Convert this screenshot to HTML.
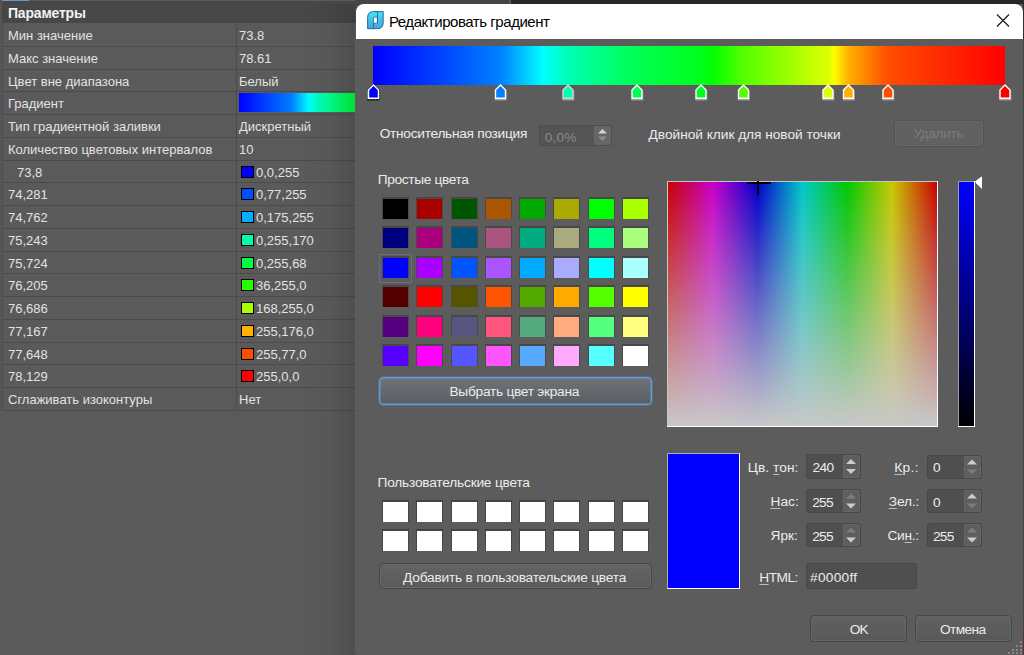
<!DOCTYPE html><html><head><meta charset="utf-8"><style>
html,body{margin:0;padding:0;width:1024px;height:655px;overflow:hidden;background:#585858;position:relative;font-family:"Liberation Sans", sans-serif;}
.t{position:absolute;line-height:20px;white-space:nowrap;}
div{box-sizing:border-box;}
u{text-decoration:underline;text-decoration-color:#bdbdbd;text-underline-offset:2px;text-decoration-thickness:1px;}
</style></head><body>
<div style="position:absolute;left:0px;top:0px;width:355px;height:655px;background:#5a5a5a"></div>
<div style="position:absolute;left:2px;top:1px;width:353px;height:22px;background:#474747"></div>
<div style="position:absolute;left:2px;top:0px;width:27px;height:1px;background:#6b97c9"></div>
<div style="position:absolute;left:0px;top:0px;width:2px;height:411px;background:#555555"></div>
<div class="t" style="left:8px;top:3px;font-size:14px;color:#f2f2f2;font-weight:bold;letter-spacing:-0.2px">Параметры</div>
<div style="position:absolute;left:2px;top:46px;width:353px;height:1px;background:#4b4b4b"></div>
<div class="t" style="left:8px;top:26px;font-size:13px;color:#e2e2e2;font-weight:normal;">Мин значение</div>
<div class="t" style="left:239px;top:26px;font-size:13px;color:#e2e2e2;font-weight:normal;">73.8</div>
<div style="position:absolute;left:2px;top:69px;width:353px;height:1px;background:#4b4b4b"></div>
<div class="t" style="left:8px;top:49px;font-size:13px;color:#e2e2e2;font-weight:normal;">Макс значение</div>
<div class="t" style="left:239px;top:49px;font-size:13px;color:#e2e2e2;font-weight:normal;">78.61</div>
<div style="position:absolute;left:2px;top:91px;width:353px;height:1px;background:#4b4b4b"></div>
<div class="t" style="left:8px;top:72px;font-size:13px;color:#e2e2e2;font-weight:normal;">Цвет вне диапазона</div>
<div class="t" style="left:239px;top:72px;font-size:13px;color:#e2e2e2;font-weight:normal;">Белый</div>
<div style="position:absolute;left:2px;top:114px;width:353px;height:1px;background:#4b4b4b"></div>
<div class="t" style="left:8px;top:94px;font-size:13px;color:#e2e2e2;font-weight:normal;">Градиент</div>
<div style="position:absolute;left:239px;top:93px;width:116px;height:19px;overflow:hidden"><div style="width:261px;height:19px;background:linear-gradient(90deg,rgb(0,0,255) 0.08%,rgb(0,3,255) 0.56%,rgb(0,6,255) 1.04%,rgb(0,9,255) 1.51%,rgb(0,12,255) 1.99%,rgb(0,15,255) 2.47%,rgb(0,18,255) 2.95%,rgb(0,21,255) 3.43%,rgb(0,24,255) 3.91%,rgb(0,27,255) 4.39%,rgb(0,30,255) 4.86%,rgb(0,34,255) 5.34%,rgb(0,37,255) 5.82%,rgb(0,40,255) 6.30%,rgb(0,43,255) 6.78%,rgb(0,46,255) 7.26%,rgb(0,49,255) 7.73%,rgb(0,52,255) 8.21%,rgb(0,55,255) 8.69%,rgb(0,58,255) 9.17%,rgb(0,61,255) 9.65%,rgb(0,64,255) 10.13%,rgb(0,67,255) 10.61%,rgb(0,70,255) 11.08%,rgb(0,73,255) 11.56%,rgb(0,76,255) 12.04%,rgb(0,79,255) 12.52%,rgb(0,82,255) 13.00%,rgb(0,85,255) 13.48%,rgb(0,88,255) 13.95%,rgb(0,91,255) 14.43%,rgb(0,94,255) 14.91%,rgb(0,98,255) 15.39%,rgb(0,101,255) 15.87%,rgb(0,104,255) 16.35%,rgb(0,107,255) 16.82%,rgb(0,110,255) 17.30%,rgb(0,113,255) 17.78%,rgb(0,116,255) 18.26%,rgb(0,119,255) 18.74%,rgb(0,122,255) 19.22%,rgb(0,125,255) 19.70%,rgb(0,128,255) 20.17%,rgb(0,137,255) 20.66%,rgb(0,146,255) 21.14%,rgb(0,156,255) 21.63%,rgb(0,165,255) 22.12%,rgb(0,174,255) 22.60%,rgb(0,183,255) 23.09%,rgb(0,192,255) 23.57%,rgb(0,201,255) 24.06%,rgb(0,211,255) 24.54%,rgb(0,220,255) 25.03%,rgb(0,229,255) 25.51%,rgb(0,238,255) 26.00%,rgb(0,247,255) 26.49%,rgb(0,255,253) 26.97%,rgb(0,255,244) 27.46%,rgb(0,255,235) 27.94%,rgb(0,255,226) 28.43%,rgb(0,255,217) 28.91%,rgb(0,255,208) 29.40%,rgb(0,255,198) 29.88%,rgb(0,255,189) 30.37%,rgb(0,255,180) 30.85%,rgb(0,255,176) 31.33%,rgb(0,255,171) 31.80%,rgb(0,255,167) 32.28%,rgb(0,255,163) 32.75%,rgb(0,255,158) 33.23%,rgb(0,255,154) 33.70%,rgb(0,255,150) 34.18%,rgb(0,255,145) 34.65%,rgb(0,255,141) 35.13%,rgb(0,255,137) 35.60%,rgb(0,255,132) 36.08%,rgb(0,255,128) 36.55%,rgb(0,255,123) 37.03%,rgb(0,255,119) 37.50%,rgb(0,255,115) 37.97%,rgb(0,255,110) 38.45%,rgb(0,255,106) 38.92%,rgb(0,255,102) 39.40%,rgb(0,255,97) 39.87%,rgb(0,255,93) 40.35%,rgb(0,255,89) 40.82%,rgb(0,255,84) 41.30%,rgb(0,255,80) 41.77%,rgb(0,255,78) 42.25%,rgb(0,255,75) 42.74%,rgb(0,255,73) 43.22%,rgb(0,255,70) 43.70%,rgb(0,255,68) 44.18%,rgb(0,255,66) 44.67%,rgb(0,255,63) 45.15%,rgb(0,255,61) 45.63%,rgb(0,255,59) 46.11%,rgb(0,255,56) 46.59%,rgb(0,255,54) 47.08%,rgb(0,255,51) 47.56%,rgb(0,255,49) 48.04%,rgb(0,255,47) 48.52%,rgb(0,255,44) 49.01%,rgb(0,255,42) 49.49%,rgb(0,255,40) 49.97%,rgb(0,255,37) 50.45%,rgb(0,255,35) 50.93%,rgb(0,255,32) 51.42%,rgb(0,255,30) 51.90%,rgb(0,255,22) 52.38%,rgb(0,255,14) 52.86%,rgb(0,255,5) 53.34%,rgb(3,255,0) 53.82%,rgb(11,255,0) 54.30%,rgb(19,255,0) 54.78%,rgb(27,255,0) 55.26%,rgb(36,255,0) 55.74%,rgb(44,255,0) 56.22%,rgb(52,255,0) 56.70%,rgb(60,255,0) 57.18%,rgb(69,255,0) 57.66%,rgb(77,255,0) 58.14%,rgb(85,255,0) 58.62%,rgb(90,255,0) 59.10%,rgb(95,255,0) 59.58%,rgb(99,255,0) 60.06%,rgb(104,255,0) 60.53%,rgb(109,255,0) 61.01%,rgb(114,255,0) 61.49%,rgb(119,255,0) 61.97%,rgb(124,255,0) 62.44%,rgb(128,255,0) 62.92%,rgb(133,255,0) 63.40%,rgb(138,255,0) 63.88%,rgb(143,255,0) 64.35%,rgb(148,255,0) 64.83%,rgb(152,255,0) 65.31%,rgb(157,255,0) 65.79%,rgb(162,255,0) 66.26%,rgb(167,255,0) 66.74%,rgb(172,255,0) 67.22%,rgb(177,255,0) 67.70%,rgb(181,255,0) 68.17%,rgb(186,255,0) 68.65%,rgb(191,255,0) 69.13%,rgb(196,255,0) 69.61%,rgb(201,255,0) 70.08%,rgb(206,255,0) 70.56%,rgb(210,255,0) 71.04%,rgb(215,255,0) 71.52%,rgb(220,255,0) 71.99%,rgb(239,255,0) 72.53%,rgb(255,252,0) 73.07%,rgb(255,233,0) 73.62%,rgb(255,214,0) 74.16%,rgb(255,195,0) 74.70%,rgb(255,176,0) 75.24%,rgb(255,168,0) 75.72%,rgb(255,161,0) 76.20%,rgb(255,153,0) 76.68%,rgb(255,146,0) 77.16%,rgb(255,138,0) 77.64%,rgb(255,130,0) 78.12%,rgb(255,123,0) 78.60%,rgb(255,115,0) 79.08%,rgb(255,107,0) 79.56%,rgb(255,100,0) 80.05%,rgb(255,92,0) 80.53%,rgb(255,85,0) 81.01%,rgb(255,77,0) 81.49%,rgb(255,75,0) 81.96%,rgb(255,73,0) 82.44%,rgb(255,71,0) 82.91%,rgb(255,69,0) 83.39%,rgb(255,67,0) 83.86%,rgb(255,65,0) 84.34%,rgb(255,63,0) 84.81%,rgb(255,61,0) 85.28%,rgb(255,59,0) 85.76%,rgb(255,57,0) 86.23%,rgb(255,55,0) 86.71%,rgb(255,53,0) 87.18%,rgb(255,51,0) 87.66%,rgb(255,49,0) 88.13%,rgb(255,47,0) 88.61%,rgb(255,45,0) 89.08%,rgb(255,43,0) 89.56%,rgb(255,41,0) 90.03%,rgb(255,39,0) 90.51%,rgb(255,38,0) 90.98%,rgb(255,36,0) 91.46%,rgb(255,34,0) 91.93%,rgb(255,32,0) 92.41%,rgb(255,30,0) 92.88%,rgb(255,28,0) 93.35%,rgb(255,26,0) 93.83%,rgb(255,24,0) 94.30%,rgb(255,22,0) 94.78%,rgb(255,20,0) 95.25%,rgb(255,18,0) 95.73%,rgb(255,16,0) 96.20%,rgb(255,14,0) 96.68%,rgb(255,12,0) 97.15%,rgb(255,10,0) 97.63%,rgb(255,8,0) 98.10%,rgb(255,6,0) 98.58%,rgb(255,4,0) 99.05%,rgb(255,2,0) 99.53%,rgb(255,0,0) 100%)"></div></div>
<div style="position:absolute;left:2px;top:137px;width:353px;height:1px;background:#4b4b4b"></div>
<div class="t" style="left:8px;top:117px;font-size:13px;color:#e2e2e2;font-weight:normal;">Тип градиентной заливки</div>
<div class="t" style="left:239px;top:117px;font-size:13px;color:#e2e2e2;font-weight:normal;">Дискретный</div>
<div style="position:absolute;left:2px;top:160px;width:353px;height:1px;background:#4b4b4b"></div>
<div class="t" style="left:8px;top:140px;font-size:13px;color:#e2e2e2;font-weight:normal;">Количество цветовых интервалов</div>
<div class="t" style="left:239px;top:140px;font-size:13px;color:#e2e2e2;font-weight:normal;">10</div>
<div style="position:absolute;left:2px;top:182px;width:353px;height:1px;background:#4b4b4b"></div>
<div class="t" style="left:17px;top:163px;font-size:13px;color:#e2e2e2;font-weight:normal;">73,8</div>
<div style="position:absolute;left:241px;top:166px;width:13px;height:12px;background:#0000ff;border:1px solid #000"></div>
<div class="t" style="left:256px;top:163px;font-size:13px;color:#e2e2e2;font-weight:normal;">0,0,255</div>
<div style="position:absolute;left:2px;top:205px;width:353px;height:1px;background:#4b4b4b"></div>
<div class="t" style="left:8px;top:185px;font-size:13px;color:#e2e2e2;font-weight:normal;">74,281</div>
<div style="position:absolute;left:241px;top:188px;width:13px;height:12px;background:#004dff;border:1px solid #000"></div>
<div class="t" style="left:256px;top:185px;font-size:13px;color:#e2e2e2;font-weight:normal;">0,77,255</div>
<div style="position:absolute;left:2px;top:228px;width:353px;height:1px;background:#4b4b4b"></div>
<div class="t" style="left:8px;top:208px;font-size:13px;color:#e2e2e2;font-weight:normal;">74,762</div>
<div style="position:absolute;left:241px;top:211px;width:13px;height:12px;background:#00afff;border:1px solid #000"></div>
<div class="t" style="left:256px;top:208px;font-size:13px;color:#e2e2e2;font-weight:normal;">0,175,255</div>
<div style="position:absolute;left:2px;top:251px;width:353px;height:1px;background:#4b4b4b"></div>
<div class="t" style="left:8px;top:231px;font-size:13px;color:#e2e2e2;font-weight:normal;">75,243</div>
<div style="position:absolute;left:241px;top:234px;width:13px;height:12px;background:#00ffaa;border:1px solid #000"></div>
<div class="t" style="left:256px;top:231px;font-size:13px;color:#e2e2e2;font-weight:normal;">0,255,170</div>
<div style="position:absolute;left:2px;top:273px;width:353px;height:1px;background:#4b4b4b"></div>
<div class="t" style="left:8px;top:254px;font-size:13px;color:#e2e2e2;font-weight:normal;">75,724</div>
<div style="position:absolute;left:241px;top:257px;width:13px;height:12px;background:#00ff44;border:1px solid #000"></div>
<div class="t" style="left:256px;top:254px;font-size:13px;color:#e2e2e2;font-weight:normal;">0,255,68</div>
<div style="position:absolute;left:2px;top:296px;width:353px;height:1px;background:#4b4b4b"></div>
<div class="t" style="left:8px;top:276px;font-size:13px;color:#e2e2e2;font-weight:normal;">76,205</div>
<div style="position:absolute;left:241px;top:279px;width:13px;height:12px;background:#24ff00;border:1px solid #000"></div>
<div class="t" style="left:256px;top:276px;font-size:13px;color:#e2e2e2;font-weight:normal;">36,255,0</div>
<div style="position:absolute;left:2px;top:319px;width:353px;height:1px;background:#4b4b4b"></div>
<div class="t" style="left:8px;top:299px;font-size:13px;color:#e2e2e2;font-weight:normal;">76,686</div>
<div style="position:absolute;left:241px;top:302px;width:13px;height:12px;background:#a8ff00;border:1px solid #000"></div>
<div class="t" style="left:256px;top:299px;font-size:13px;color:#e2e2e2;font-weight:normal;">168,255,0</div>
<div style="position:absolute;left:2px;top:342px;width:353px;height:1px;background:#4b4b4b"></div>
<div class="t" style="left:8px;top:322px;font-size:13px;color:#e2e2e2;font-weight:normal;">77,167</div>
<div style="position:absolute;left:241px;top:325px;width:13px;height:12px;background:#ffb000;border:1px solid #000"></div>
<div class="t" style="left:256px;top:322px;font-size:13px;color:#e2e2e2;font-weight:normal;">255,176,0</div>
<div style="position:absolute;left:2px;top:364px;width:353px;height:1px;background:#4b4b4b"></div>
<div class="t" style="left:8px;top:345px;font-size:13px;color:#e2e2e2;font-weight:normal;">77,648</div>
<div style="position:absolute;left:241px;top:348px;width:13px;height:12px;background:#ff4d00;border:1px solid #000"></div>
<div class="t" style="left:256px;top:345px;font-size:13px;color:#e2e2e2;font-weight:normal;">255,77,0</div>
<div style="position:absolute;left:2px;top:387px;width:353px;height:1px;background:#4b4b4b"></div>
<div class="t" style="left:8px;top:367px;font-size:13px;color:#e2e2e2;font-weight:normal;">78,129</div>
<div style="position:absolute;left:241px;top:370px;width:13px;height:12px;background:#ff0000;border:1px solid #000"></div>
<div class="t" style="left:256px;top:367px;font-size:13px;color:#e2e2e2;font-weight:normal;">255,0,0</div>
<div style="position:absolute;left:2px;top:410px;width:353px;height:1px;background:#4b4b4b"></div>
<div class="t" style="left:8px;top:390px;font-size:13px;color:#e2e2e2;font-weight:normal;">Сглаживать изоконтуры</div>
<div class="t" style="left:239px;top:390px;font-size:13px;color:#e2e2e2;font-weight:normal;">Нет</div>
<div style="position:absolute;left:2px;top:23px;width:1px;height:387px;background:#505050"></div>
<div style="position:absolute;left:236px;top:23px;width:1px;height:387px;background:#4b4b4b"></div>
<div style="position:absolute;left:300px;top:4px;width:55px;height:651px;background:linear-gradient(90deg,rgba(0,0,0,0),rgba(0,0,0,0.03) 50%,rgba(0,0,0,0.13))"></div>
<div style="position:absolute;left:355px;top:0px;width:155px;height:4px;background:#454545"></div>
<div style="position:absolute;left:510px;top:0px;width:514px;height:4px;background:#282828"></div>
<div style="position:absolute;left:509px;top:0px;width:2px;height:4px;background:#555555"></div>
<div style="position:absolute;left:355px;top:4px;width:12px;height:19px;background:#474747"></div>
<div style="position:absolute;left:356px;top:4px;width:667px;height:35px;background:#ffffff;border-radius:8px 8px 0 0"></div>
<div style="position:absolute;left:355px;top:39px;width:668px;height:617px;background:#5c5c5c;border-radius:0 0 9px 9px;box-shadow:inset 1px 0 0 #606060"></div>
<div style="position:absolute;left:1023px;top:0px;width:1px;height:655px;background:#474747"></div>
<div style="position:absolute;left:1023px;top:0px;width:1px;height:39px;background:#2e2e2e"></div>
<div style="position:absolute;left:1023px;top:600px;width:1px;height:55px;background:linear-gradient(#474747,#5a3030)"></div>
<svg style="position:absolute;left:364px;top:8px" width="24" height="24" viewBox="0 0 24 24">
<defs><linearGradient id="ig" x1="0" y1="0" x2="0" y2="1"><stop offset="0" stop-color="#46e4f8"/><stop offset="1" stop-color="#47a0de"/></linearGradient></defs>
<path d="M3.6,20.7 V9.6 Q3.6,3.6 9.6,3.6 H19.2 V14.7 Q19.2,20.7 13.2,20.7 Z" fill="url(#ig)" stroke="#1d5f86" stroke-width="0.9"/>
<path d="M9.4,15.2 V9.9 Q9.4,9.3 10.2,9.3 H13.4 V15.2 Z" fill="#ffffff" stroke="#1d5f86" stroke-width="0.7"/>
<path d="M13.5,3.8 V15.2 M9.4,15.2 V20.5" stroke="#1d5f86" stroke-width="0.8"/>
</svg>
<div class="t" style="left:388.9px;top:12.0px;font-size:15px;color:#000000;letter-spacing:-0.452px">Редактировать градиент</div>
<svg style="position:absolute;left:994px;top:11px" width="18" height="18" viewBox="0 0 18 18"><path d="M3,3.5 L15,15.5 M15,3.5 L3,15.5" stroke="#222" stroke-width="1.3"/></svg>
<div style="position:absolute;left:373px;top:46px;width:632px;height:39px;background:linear-gradient(90deg,rgb(0,0,255) 0.08%,rgb(0,3,255) 0.56%,rgb(0,6,255) 1.04%,rgb(0,9,255) 1.51%,rgb(0,12,255) 1.99%,rgb(0,15,255) 2.47%,rgb(0,18,255) 2.95%,rgb(0,21,255) 3.43%,rgb(0,24,255) 3.91%,rgb(0,27,255) 4.39%,rgb(0,30,255) 4.86%,rgb(0,34,255) 5.34%,rgb(0,37,255) 5.82%,rgb(0,40,255) 6.30%,rgb(0,43,255) 6.78%,rgb(0,46,255) 7.26%,rgb(0,49,255) 7.73%,rgb(0,52,255) 8.21%,rgb(0,55,255) 8.69%,rgb(0,58,255) 9.17%,rgb(0,61,255) 9.65%,rgb(0,64,255) 10.13%,rgb(0,67,255) 10.61%,rgb(0,70,255) 11.08%,rgb(0,73,255) 11.56%,rgb(0,76,255) 12.04%,rgb(0,79,255) 12.52%,rgb(0,82,255) 13.00%,rgb(0,85,255) 13.48%,rgb(0,88,255) 13.95%,rgb(0,91,255) 14.43%,rgb(0,94,255) 14.91%,rgb(0,98,255) 15.39%,rgb(0,101,255) 15.87%,rgb(0,104,255) 16.35%,rgb(0,107,255) 16.82%,rgb(0,110,255) 17.30%,rgb(0,113,255) 17.78%,rgb(0,116,255) 18.26%,rgb(0,119,255) 18.74%,rgb(0,122,255) 19.22%,rgb(0,125,255) 19.70%,rgb(0,128,255) 20.17%,rgb(0,137,255) 20.66%,rgb(0,146,255) 21.14%,rgb(0,156,255) 21.63%,rgb(0,165,255) 22.12%,rgb(0,174,255) 22.60%,rgb(0,183,255) 23.09%,rgb(0,192,255) 23.57%,rgb(0,201,255) 24.06%,rgb(0,211,255) 24.54%,rgb(0,220,255) 25.03%,rgb(0,229,255) 25.51%,rgb(0,238,255) 26.00%,rgb(0,247,255) 26.49%,rgb(0,255,253) 26.97%,rgb(0,255,244) 27.46%,rgb(0,255,235) 27.94%,rgb(0,255,226) 28.43%,rgb(0,255,217) 28.91%,rgb(0,255,208) 29.40%,rgb(0,255,198) 29.88%,rgb(0,255,189) 30.37%,rgb(0,255,180) 30.85%,rgb(0,255,176) 31.33%,rgb(0,255,171) 31.80%,rgb(0,255,167) 32.28%,rgb(0,255,163) 32.75%,rgb(0,255,158) 33.23%,rgb(0,255,154) 33.70%,rgb(0,255,150) 34.18%,rgb(0,255,145) 34.65%,rgb(0,255,141) 35.13%,rgb(0,255,137) 35.60%,rgb(0,255,132) 36.08%,rgb(0,255,128) 36.55%,rgb(0,255,123) 37.03%,rgb(0,255,119) 37.50%,rgb(0,255,115) 37.97%,rgb(0,255,110) 38.45%,rgb(0,255,106) 38.92%,rgb(0,255,102) 39.40%,rgb(0,255,97) 39.87%,rgb(0,255,93) 40.35%,rgb(0,255,89) 40.82%,rgb(0,255,84) 41.30%,rgb(0,255,80) 41.77%,rgb(0,255,78) 42.25%,rgb(0,255,75) 42.74%,rgb(0,255,73) 43.22%,rgb(0,255,70) 43.70%,rgb(0,255,68) 44.18%,rgb(0,255,66) 44.67%,rgb(0,255,63) 45.15%,rgb(0,255,61) 45.63%,rgb(0,255,59) 46.11%,rgb(0,255,56) 46.59%,rgb(0,255,54) 47.08%,rgb(0,255,51) 47.56%,rgb(0,255,49) 48.04%,rgb(0,255,47) 48.52%,rgb(0,255,44) 49.01%,rgb(0,255,42) 49.49%,rgb(0,255,40) 49.97%,rgb(0,255,37) 50.45%,rgb(0,255,35) 50.93%,rgb(0,255,32) 51.42%,rgb(0,255,30) 51.90%,rgb(0,255,22) 52.38%,rgb(0,255,14) 52.86%,rgb(0,255,5) 53.34%,rgb(3,255,0) 53.82%,rgb(11,255,0) 54.30%,rgb(19,255,0) 54.78%,rgb(27,255,0) 55.26%,rgb(36,255,0) 55.74%,rgb(44,255,0) 56.22%,rgb(52,255,0) 56.70%,rgb(60,255,0) 57.18%,rgb(69,255,0) 57.66%,rgb(77,255,0) 58.14%,rgb(85,255,0) 58.62%,rgb(90,255,0) 59.10%,rgb(95,255,0) 59.58%,rgb(99,255,0) 60.06%,rgb(104,255,0) 60.53%,rgb(109,255,0) 61.01%,rgb(114,255,0) 61.49%,rgb(119,255,0) 61.97%,rgb(124,255,0) 62.44%,rgb(128,255,0) 62.92%,rgb(133,255,0) 63.40%,rgb(138,255,0) 63.88%,rgb(143,255,0) 64.35%,rgb(148,255,0) 64.83%,rgb(152,255,0) 65.31%,rgb(157,255,0) 65.79%,rgb(162,255,0) 66.26%,rgb(167,255,0) 66.74%,rgb(172,255,0) 67.22%,rgb(177,255,0) 67.70%,rgb(181,255,0) 68.17%,rgb(186,255,0) 68.65%,rgb(191,255,0) 69.13%,rgb(196,255,0) 69.61%,rgb(201,255,0) 70.08%,rgb(206,255,0) 70.56%,rgb(210,255,0) 71.04%,rgb(215,255,0) 71.52%,rgb(220,255,0) 71.99%,rgb(239,255,0) 72.53%,rgb(255,252,0) 73.07%,rgb(255,233,0) 73.62%,rgb(255,214,0) 74.16%,rgb(255,195,0) 74.70%,rgb(255,176,0) 75.24%,rgb(255,168,0) 75.72%,rgb(255,161,0) 76.20%,rgb(255,153,0) 76.68%,rgb(255,146,0) 77.16%,rgb(255,138,0) 77.64%,rgb(255,130,0) 78.12%,rgb(255,123,0) 78.60%,rgb(255,115,0) 79.08%,rgb(255,107,0) 79.56%,rgb(255,100,0) 80.05%,rgb(255,92,0) 80.53%,rgb(255,85,0) 81.01%,rgb(255,77,0) 81.49%,rgb(255,75,0) 81.96%,rgb(255,73,0) 82.44%,rgb(255,71,0) 82.91%,rgb(255,69,0) 83.39%,rgb(255,67,0) 83.86%,rgb(255,65,0) 84.34%,rgb(255,63,0) 84.81%,rgb(255,61,0) 85.28%,rgb(255,59,0) 85.76%,rgb(255,57,0) 86.23%,rgb(255,55,0) 86.71%,rgb(255,53,0) 87.18%,rgb(255,51,0) 87.66%,rgb(255,49,0) 88.13%,rgb(255,47,0) 88.61%,rgb(255,45,0) 89.08%,rgb(255,43,0) 89.56%,rgb(255,41,0) 90.03%,rgb(255,39,0) 90.51%,rgb(255,38,0) 90.98%,rgb(255,36,0) 91.46%,rgb(255,34,0) 91.93%,rgb(255,32,0) 92.41%,rgb(255,30,0) 92.88%,rgb(255,28,0) 93.35%,rgb(255,26,0) 93.83%,rgb(255,24,0) 94.30%,rgb(255,22,0) 94.78%,rgb(255,20,0) 95.25%,rgb(255,18,0) 95.73%,rgb(255,16,0) 96.20%,rgb(255,14,0) 96.68%,rgb(255,12,0) 97.15%,rgb(255,10,0) 97.63%,rgb(255,8,0) 98.10%,rgb(255,6,0) 98.58%,rgb(255,4,0) 99.05%,rgb(255,2,0) 99.53%,rgb(255,0,0) 100%)"></div>
<svg style="position:absolute;left:365px;top:80px" width="18" height="22" viewBox="0 0 18 22"><path d="M3.50,10.0 L8.50,5.0 L13.50,10.0 V18.299999999999997 H3.50 Z" fill="rgb(0,0,255)" stroke="#ffffff" stroke-width="1.4" stroke-linejoin="miter"/><path d="M2.30,19.9 H14.70" stroke="#000" stroke-width="1.2" stroke-dasharray="2,1"/><path d="M2.40,9.8 L8.50,3.8 L14.60,9.8 V19.299999999999997" fill="none" stroke="#000" stroke-width="0.9" stroke-dasharray="1.4,1.4" opacity="0.75"/></svg>
<svg style="position:absolute;left:492px;top:80px" width="18" height="22" viewBox="0 0 18 22"><path d="M2.80,18.9 H14.80 V20.4 H2.80 Z" fill="#a2a2a2"/><path d="M14.50,10.8 V19.799999999999997" stroke="#8a8a8a" stroke-width="1" opacity="0.7"/><path d="M3.50,10.0 L8.50,5.0 L13.50,10.0 V18.299999999999997 H3.50 Z" fill="rgb(0,128,255)" stroke="#ffffff" stroke-width="1.4" stroke-linejoin="miter"/></svg>
<svg style="position:absolute;left:560px;top:80px" width="18" height="22" viewBox="0 0 18 22"><path d="M2.30,18.9 H14.30 V20.4 H2.30 Z" fill="#a2a2a2"/><path d="M14.00,10.8 V19.799999999999997" stroke="#8a8a8a" stroke-width="1" opacity="0.7"/><path d="M3.00,10.0 L8.00,5.0 L13.00,10.0 V18.299999999999997 H3.00 Z" fill="rgb(0,255,180)" stroke="#d4d4d4" stroke-width="1.4" stroke-linejoin="miter"/></svg>
<svg style="position:absolute;left:629px;top:80px" width="18" height="22" viewBox="0 0 18 22"><path d="M2.30,18.9 H14.30 V20.4 H2.30 Z" fill="#a2a2a2"/><path d="M14.00,10.8 V19.799999999999997" stroke="#8a8a8a" stroke-width="1" opacity="0.7"/><path d="M3.00,10.0 L8.00,5.0 L13.00,10.0 V18.299999999999997 H3.00 Z" fill="rgb(0,255,80)" stroke="#ffffff" stroke-width="1.4" stroke-linejoin="miter"/></svg>
<svg style="position:absolute;left:693px;top:80px" width="18" height="22" viewBox="0 0 18 22"><path d="M2.30,18.9 H14.30 V20.4 H2.30 Z" fill="#a2a2a2"/><path d="M14.00,10.8 V19.799999999999997" stroke="#8a8a8a" stroke-width="1" opacity="0.7"/><path d="M3.00,10.0 L8.00,5.0 L13.00,10.0 V18.299999999999997 H3.00 Z" fill="rgb(0,255,30)" stroke="#ffffff" stroke-width="1.4" stroke-linejoin="miter"/></svg>
<svg style="position:absolute;left:735px;top:80px" width="18" height="22" viewBox="0 0 18 22"><path d="M2.80,18.9 H14.80 V20.4 H2.80 Z" fill="#a2a2a2"/><path d="M14.50,10.8 V19.799999999999997" stroke="#8a8a8a" stroke-width="1" opacity="0.7"/><path d="M3.50,10.0 L8.50,5.0 L13.50,10.0 V18.299999999999997 H3.50 Z" fill="rgb(85,255,0)" stroke="#ffffff" stroke-width="1.4" stroke-linejoin="miter"/></svg>
<svg style="position:absolute;left:820px;top:80px" width="18" height="22" viewBox="0 0 18 22"><path d="M2.30,18.9 H14.30 V20.4 H2.30 Z" fill="#a2a2a2"/><path d="M14.00,10.8 V19.799999999999997" stroke="#8a8a8a" stroke-width="1" opacity="0.7"/><path d="M3.00,10.0 L8.00,5.0 L13.00,10.0 V18.299999999999997 H3.00 Z" fill="rgb(220,255,0)" stroke="#ffffff" stroke-width="1.4" stroke-linejoin="miter"/></svg>
<svg style="position:absolute;left:840px;top:80px" width="18" height="22" viewBox="0 0 18 22"><path d="M2.80,18.9 H14.80 V20.4 H2.80 Z" fill="#a2a2a2"/><path d="M14.50,10.8 V19.799999999999997" stroke="#8a8a8a" stroke-width="1" opacity="0.7"/><path d="M3.50,10.0 L8.50,5.0 L13.50,10.0 V18.299999999999997 H3.50 Z" fill="rgb(255,176,0)" stroke="#ffffff" stroke-width="1.4" stroke-linejoin="miter"/></svg>
<svg style="position:absolute;left:880px;top:80px" width="18" height="22" viewBox="0 0 18 22"><path d="M2.30,18.9 H14.30 V20.4 H2.30 Z" fill="#a2a2a2"/><path d="M14.00,10.8 V19.799999999999997" stroke="#8a8a8a" stroke-width="1" opacity="0.7"/><path d="M3.00,10.0 L8.00,5.0 L13.00,10.0 V18.299999999999997 H3.00 Z" fill="rgb(255,77,0)" stroke="#ffffff" stroke-width="1.4" stroke-linejoin="miter"/></svg>
<svg style="position:absolute;left:997px;top:80px" width="18" height="22" viewBox="0 0 18 22"><path d="M2.30,18.9 H14.30 V20.4 H2.30 Z" fill="#a2a2a2"/><path d="M14.00,10.8 V19.799999999999997" stroke="#8a8a8a" stroke-width="1" opacity="0.7"/><path d="M3.00,10.0 L8.00,5.0 L13.00,10.0 V18.299999999999997 H3.00 Z" fill="rgb(255,0,0)" stroke="#ffffff" stroke-width="1.4" stroke-linejoin="miter"/></svg>
<div class="t" style="left:379.7px;top:124.4px;font-size:13.7px;color:#ececec;letter-spacing:-0.27px">Относительная позиция</div>
<div style="position:absolute;left:539px;top:125px;width:73px;height:21px;background:#545454;border-radius:3px;box-shadow:inset 0 0 0 1px #4d4d4d"></div>
<div style="position:absolute;left:594px;top:126px;width:17px;height:19px;background:#666666;border-radius:0 2px 2px 0"></div>
<svg style="position:absolute;left:594px;top:125px" width="18" height="22"><path d="M4,8.5 L8.5,4 L13,8.5 Z" fill="#d2d2d2"/><path d="M4,11.5 L8.5,16 L13,11.5 Z" fill="#8c8c8c"/></svg>
<div class="t" style="left:544.8px;top:127.5px;font-size:13.7px;color:#858a8f;letter-spacing:0.167px">0,0%</div>
<div class="t" style="left:648.6px;top:124.6px;font-size:13.7px;color:#ececec;letter-spacing:-0.022px">Двойной клик для новой точки</div>
<div style="position:absolute;left:894px;top:120px;width:90px;height:27px;background:#616161;border:1px solid #525252;border-radius:4px;box-shadow:inset 0 0 0 1px #676767"></div>
<div class="t" style="left:913.3px;top:124.4px;font-size:13.7px;color:#7c7c7c;letter-spacing:-0.333px">Удалить</div>
<div class="t" style="left:377.8px;top:169.8px;font-size:13.7px;color:#ececec;letter-spacing:-0.35px">Простые цвета</div>
<div style="position:absolute;left:382px;top:197px;width:27px;height:22px;background:#4a4a4a;border-top:1px solid #464646"></div>
<div style="position:absolute;left:383px;top:199px;width:25px;height:20px;background:rgb(0,0,0)"></div>
<div style="position:absolute;left:382px;top:226px;width:27px;height:22px;background:#4a4a4a;border-top:1px solid #464646"></div>
<div style="position:absolute;left:383px;top:228px;width:25px;height:20px;background:rgb(0,0,127)"></div>
<div style="position:absolute;left:382px;top:256px;width:27px;height:22px;background:#4a4a4a;border-top:1px solid #464646"></div>
<div style="position:absolute;left:383px;top:258px;width:25px;height:20px;background:rgb(0,0,255)"></div>
<div style="position:absolute;left:382px;top:285px;width:27px;height:22px;background:#4a4a4a;border-top:1px solid #464646"></div>
<div style="position:absolute;left:383px;top:287px;width:25px;height:20px;background:rgb(85,0,0)"></div>
<div style="position:absolute;left:382px;top:315px;width:27px;height:22px;background:#4a4a4a;border-top:1px solid #464646"></div>
<div style="position:absolute;left:383px;top:317px;width:25px;height:20px;background:rgb(85,0,127)"></div>
<div style="position:absolute;left:382px;top:344px;width:27px;height:22px;background:#4a4a4a;border-top:1px solid #464646"></div>
<div style="position:absolute;left:383px;top:346px;width:25px;height:20px;background:rgb(85,0,255)"></div>
<div style="position:absolute;left:416px;top:197px;width:27px;height:22px;background:#4a4a4a;border-top:1px solid #464646"></div>
<div style="position:absolute;left:417px;top:199px;width:25px;height:20px;background:rgb(170,0,0)"></div>
<div style="position:absolute;left:416px;top:226px;width:27px;height:22px;background:#4a4a4a;border-top:1px solid #464646"></div>
<div style="position:absolute;left:417px;top:228px;width:25px;height:20px;background:rgb(170,0,127)"></div>
<div style="position:absolute;left:416px;top:256px;width:27px;height:22px;background:#4a4a4a;border-top:1px solid #464646"></div>
<div style="position:absolute;left:417px;top:258px;width:25px;height:20px;background:rgb(170,0,255)"></div>
<div style="position:absolute;left:416px;top:285px;width:27px;height:22px;background:#4a4a4a;border-top:1px solid #464646"></div>
<div style="position:absolute;left:417px;top:287px;width:25px;height:20px;background:rgb(255,0,0)"></div>
<div style="position:absolute;left:416px;top:315px;width:27px;height:22px;background:#4a4a4a;border-top:1px solid #464646"></div>
<div style="position:absolute;left:417px;top:317px;width:25px;height:20px;background:rgb(255,0,127)"></div>
<div style="position:absolute;left:416px;top:344px;width:27px;height:22px;background:#4a4a4a;border-top:1px solid #464646"></div>
<div style="position:absolute;left:417px;top:346px;width:25px;height:20px;background:rgb(255,0,255)"></div>
<div style="position:absolute;left:451px;top:197px;width:27px;height:22px;background:#4a4a4a;border-top:1px solid #464646"></div>
<div style="position:absolute;left:452px;top:199px;width:25px;height:20px;background:rgb(0,85,0)"></div>
<div style="position:absolute;left:451px;top:226px;width:27px;height:22px;background:#4a4a4a;border-top:1px solid #464646"></div>
<div style="position:absolute;left:452px;top:228px;width:25px;height:20px;background:rgb(0,85,127)"></div>
<div style="position:absolute;left:451px;top:256px;width:27px;height:22px;background:#4a4a4a;border-top:1px solid #464646"></div>
<div style="position:absolute;left:452px;top:258px;width:25px;height:20px;background:rgb(0,85,255)"></div>
<div style="position:absolute;left:451px;top:285px;width:27px;height:22px;background:#4a4a4a;border-top:1px solid #464646"></div>
<div style="position:absolute;left:452px;top:287px;width:25px;height:20px;background:rgb(85,85,0)"></div>
<div style="position:absolute;left:451px;top:315px;width:27px;height:22px;background:#4a4a4a;border-top:1px solid #464646"></div>
<div style="position:absolute;left:452px;top:317px;width:25px;height:20px;background:rgb(85,85,127)"></div>
<div style="position:absolute;left:451px;top:344px;width:27px;height:22px;background:#4a4a4a;border-top:1px solid #464646"></div>
<div style="position:absolute;left:452px;top:346px;width:25px;height:20px;background:rgb(85,85,255)"></div>
<div style="position:absolute;left:485px;top:197px;width:27px;height:22px;background:#4a4a4a;border-top:1px solid #464646"></div>
<div style="position:absolute;left:486px;top:199px;width:25px;height:20px;background:rgb(170,85,0)"></div>
<div style="position:absolute;left:485px;top:226px;width:27px;height:22px;background:#4a4a4a;border-top:1px solid #464646"></div>
<div style="position:absolute;left:486px;top:228px;width:25px;height:20px;background:rgb(170,85,127)"></div>
<div style="position:absolute;left:485px;top:256px;width:27px;height:22px;background:#4a4a4a;border-top:1px solid #464646"></div>
<div style="position:absolute;left:486px;top:258px;width:25px;height:20px;background:rgb(170,85,255)"></div>
<div style="position:absolute;left:485px;top:285px;width:27px;height:22px;background:#4a4a4a;border-top:1px solid #464646"></div>
<div style="position:absolute;left:486px;top:287px;width:25px;height:20px;background:rgb(255,85,0)"></div>
<div style="position:absolute;left:485px;top:315px;width:27px;height:22px;background:#4a4a4a;border-top:1px solid #464646"></div>
<div style="position:absolute;left:486px;top:317px;width:25px;height:20px;background:rgb(255,85,127)"></div>
<div style="position:absolute;left:485px;top:344px;width:27px;height:22px;background:#4a4a4a;border-top:1px solid #464646"></div>
<div style="position:absolute;left:486px;top:346px;width:25px;height:20px;background:rgb(255,85,255)"></div>
<div style="position:absolute;left:519px;top:197px;width:27px;height:22px;background:#4a4a4a;border-top:1px solid #464646"></div>
<div style="position:absolute;left:520px;top:199px;width:25px;height:20px;background:rgb(0,170,0)"></div>
<div style="position:absolute;left:519px;top:226px;width:27px;height:22px;background:#4a4a4a;border-top:1px solid #464646"></div>
<div style="position:absolute;left:520px;top:228px;width:25px;height:20px;background:rgb(0,170,127)"></div>
<div style="position:absolute;left:519px;top:256px;width:27px;height:22px;background:#4a4a4a;border-top:1px solid #464646"></div>
<div style="position:absolute;left:520px;top:258px;width:25px;height:20px;background:rgb(0,170,255)"></div>
<div style="position:absolute;left:519px;top:285px;width:27px;height:22px;background:#4a4a4a;border-top:1px solid #464646"></div>
<div style="position:absolute;left:520px;top:287px;width:25px;height:20px;background:rgb(85,170,0)"></div>
<div style="position:absolute;left:519px;top:315px;width:27px;height:22px;background:#4a4a4a;border-top:1px solid #464646"></div>
<div style="position:absolute;left:520px;top:317px;width:25px;height:20px;background:rgb(85,170,127)"></div>
<div style="position:absolute;left:519px;top:344px;width:27px;height:22px;background:#4a4a4a;border-top:1px solid #464646"></div>
<div style="position:absolute;left:520px;top:346px;width:25px;height:20px;background:rgb(85,170,255)"></div>
<div style="position:absolute;left:553px;top:197px;width:27px;height:22px;background:#4a4a4a;border-top:1px solid #464646"></div>
<div style="position:absolute;left:554px;top:199px;width:25px;height:20px;background:rgb(170,170,0)"></div>
<div style="position:absolute;left:553px;top:226px;width:27px;height:22px;background:#4a4a4a;border-top:1px solid #464646"></div>
<div style="position:absolute;left:554px;top:228px;width:25px;height:20px;background:rgb(170,170,127)"></div>
<div style="position:absolute;left:553px;top:256px;width:27px;height:22px;background:#4a4a4a;border-top:1px solid #464646"></div>
<div style="position:absolute;left:554px;top:258px;width:25px;height:20px;background:rgb(170,170,255)"></div>
<div style="position:absolute;left:553px;top:285px;width:27px;height:22px;background:#4a4a4a;border-top:1px solid #464646"></div>
<div style="position:absolute;left:554px;top:287px;width:25px;height:20px;background:rgb(255,170,0)"></div>
<div style="position:absolute;left:553px;top:315px;width:27px;height:22px;background:#4a4a4a;border-top:1px solid #464646"></div>
<div style="position:absolute;left:554px;top:317px;width:25px;height:20px;background:rgb(255,170,127)"></div>
<div style="position:absolute;left:553px;top:344px;width:27px;height:22px;background:#4a4a4a;border-top:1px solid #464646"></div>
<div style="position:absolute;left:554px;top:346px;width:25px;height:20px;background:rgb(255,170,255)"></div>
<div style="position:absolute;left:588px;top:197px;width:27px;height:22px;background:#4a4a4a;border-top:1px solid #464646"></div>
<div style="position:absolute;left:589px;top:199px;width:25px;height:20px;background:rgb(0,255,0)"></div>
<div style="position:absolute;left:588px;top:226px;width:27px;height:22px;background:#4a4a4a;border-top:1px solid #464646"></div>
<div style="position:absolute;left:589px;top:228px;width:25px;height:20px;background:rgb(0,255,127)"></div>
<div style="position:absolute;left:588px;top:256px;width:27px;height:22px;background:#4a4a4a;border-top:1px solid #464646"></div>
<div style="position:absolute;left:589px;top:258px;width:25px;height:20px;background:rgb(0,255,255)"></div>
<div style="position:absolute;left:588px;top:285px;width:27px;height:22px;background:#4a4a4a;border-top:1px solid #464646"></div>
<div style="position:absolute;left:589px;top:287px;width:25px;height:20px;background:rgb(85,255,0)"></div>
<div style="position:absolute;left:588px;top:315px;width:27px;height:22px;background:#4a4a4a;border-top:1px solid #464646"></div>
<div style="position:absolute;left:589px;top:317px;width:25px;height:20px;background:rgb(85,255,127)"></div>
<div style="position:absolute;left:588px;top:344px;width:27px;height:22px;background:#4a4a4a;border-top:1px solid #464646"></div>
<div style="position:absolute;left:589px;top:346px;width:25px;height:20px;background:rgb(85,255,255)"></div>
<div style="position:absolute;left:622px;top:197px;width:27px;height:22px;background:#4a4a4a;border-top:1px solid #464646"></div>
<div style="position:absolute;left:623px;top:199px;width:25px;height:20px;background:rgb(170,255,0)"></div>
<div style="position:absolute;left:622px;top:226px;width:27px;height:22px;background:#4a4a4a;border-top:1px solid #464646"></div>
<div style="position:absolute;left:623px;top:228px;width:25px;height:20px;background:rgb(170,255,127)"></div>
<div style="position:absolute;left:622px;top:256px;width:27px;height:22px;background:#4a4a4a;border-top:1px solid #464646"></div>
<div style="position:absolute;left:623px;top:258px;width:25px;height:20px;background:rgb(170,255,255)"></div>
<div style="position:absolute;left:622px;top:285px;width:27px;height:22px;background:#4a4a4a;border-top:1px solid #464646"></div>
<div style="position:absolute;left:623px;top:287px;width:25px;height:20px;background:rgb(255,255,0)"></div>
<div style="position:absolute;left:622px;top:315px;width:27px;height:22px;background:#4a4a4a;border-top:1px solid #464646"></div>
<div style="position:absolute;left:623px;top:317px;width:25px;height:20px;background:rgb(255,255,127)"></div>
<div style="position:absolute;left:622px;top:344px;width:27px;height:22px;background:#4a4a4a;border-top:1px solid #464646"></div>
<div style="position:absolute;left:623px;top:346px;width:25px;height:20px;background:rgb(255,255,255)"></div>
<div style="position:absolute;left:379px;top:254px;width:33px;height:29px;border:1px solid #617487;border-radius:1px"></div>
<div style="position:absolute;left:379px;top:377px;width:273px;height:28px;border:1px solid #5aa0e8;border-radius:4px;box-shadow:inset 0 0 0 1px rgba(120,160,210,0.35), 0 0 0 0.5px rgba(90,160,232,0.5);background:linear-gradient(#6f7277,#5b5e63)"></div>
<div class="t" style="left:449.5px;top:381.8px;font-size:13.7px;color:#ececec;letter-spacing:-0.256px">Выбрать цвет экрана</div>
<div class="t" style="left:377.5px;top:472.9px;font-size:13.7px;color:#ececec;letter-spacing:-0.195px">Пользовательские цвета</div>
<div style="position:absolute;left:382px;top:500px;width:27px;height:22px;background:#464646;border-top:1px solid #424242"></div>
<div style="position:absolute;left:383px;top:502px;width:25px;height:20px;background:#ffffff"></div>
<div style="position:absolute;left:416px;top:500px;width:27px;height:22px;background:#464646;border-top:1px solid #424242"></div>
<div style="position:absolute;left:417px;top:502px;width:25px;height:20px;background:#ffffff"></div>
<div style="position:absolute;left:451px;top:500px;width:27px;height:22px;background:#464646;border-top:1px solid #424242"></div>
<div style="position:absolute;left:452px;top:502px;width:25px;height:20px;background:#ffffff"></div>
<div style="position:absolute;left:485px;top:500px;width:27px;height:22px;background:#464646;border-top:1px solid #424242"></div>
<div style="position:absolute;left:486px;top:502px;width:25px;height:20px;background:#ffffff"></div>
<div style="position:absolute;left:519px;top:500px;width:27px;height:22px;background:#464646;border-top:1px solid #424242"></div>
<div style="position:absolute;left:520px;top:502px;width:25px;height:20px;background:#ffffff"></div>
<div style="position:absolute;left:553px;top:500px;width:27px;height:22px;background:#464646;border-top:1px solid #424242"></div>
<div style="position:absolute;left:554px;top:502px;width:25px;height:20px;background:#ffffff"></div>
<div style="position:absolute;left:588px;top:500px;width:27px;height:22px;background:#464646;border-top:1px solid #424242"></div>
<div style="position:absolute;left:589px;top:502px;width:25px;height:20px;background:#ffffff"></div>
<div style="position:absolute;left:622px;top:500px;width:27px;height:22px;background:#464646;border-top:1px solid #424242"></div>
<div style="position:absolute;left:623px;top:502px;width:25px;height:20px;background:#ffffff"></div>
<div style="position:absolute;left:382px;top:529px;width:27px;height:22px;background:#464646;border-top:1px solid #424242"></div>
<div style="position:absolute;left:383px;top:531px;width:25px;height:20px;background:#ffffff"></div>
<div style="position:absolute;left:416px;top:529px;width:27px;height:22px;background:#464646;border-top:1px solid #424242"></div>
<div style="position:absolute;left:417px;top:531px;width:25px;height:20px;background:#ffffff"></div>
<div style="position:absolute;left:451px;top:529px;width:27px;height:22px;background:#464646;border-top:1px solid #424242"></div>
<div style="position:absolute;left:452px;top:531px;width:25px;height:20px;background:#ffffff"></div>
<div style="position:absolute;left:485px;top:529px;width:27px;height:22px;background:#464646;border-top:1px solid #424242"></div>
<div style="position:absolute;left:486px;top:531px;width:25px;height:20px;background:#ffffff"></div>
<div style="position:absolute;left:519px;top:529px;width:27px;height:22px;background:#464646;border-top:1px solid #424242"></div>
<div style="position:absolute;left:520px;top:531px;width:25px;height:20px;background:#ffffff"></div>
<div style="position:absolute;left:553px;top:529px;width:27px;height:22px;background:#464646;border-top:1px solid #424242"></div>
<div style="position:absolute;left:554px;top:531px;width:25px;height:20px;background:#ffffff"></div>
<div style="position:absolute;left:588px;top:529px;width:27px;height:22px;background:#464646;border-top:1px solid #424242"></div>
<div style="position:absolute;left:589px;top:531px;width:25px;height:20px;background:#ffffff"></div>
<div style="position:absolute;left:622px;top:529px;width:27px;height:22px;background:#464646;border-top:1px solid #424242"></div>
<div style="position:absolute;left:623px;top:531px;width:25px;height:20px;background:#ffffff"></div>
<div style="position:absolute;left:379px;top:563px;width:273px;height:26px;border:1px solid #474747;border-radius:4px;box-shadow:inset 0 0 0 1px #686868;background:linear-gradient(#646464,#5a5a5a)"></div>
<div class="t" style="left:403.0px;top:568.2px;font-size:13.7px;color:#ececec;letter-spacing:-0.194px">Добавить в пользовательские цвета</div>
<div style="position:absolute;left:667px;top:181px;width:271px;height:246px;background:#c8c8c8"></div>
<div style="position:absolute;left:668px;top:182px;width:269px;height:244px;background:linear-gradient(180deg,rgba(200,200,200,0),rgb(200,200,200)),linear-gradient(90deg,rgb(200,0,0) 0%,rgb(200,0,200) 16.667%,rgb(0,0,200) 33.333%,rgb(0,200,200) 50%,rgb(0,200,0) 66.667%,rgb(200,200,0) 83.333%,rgb(200,0,0) 100%)"></div>
<div style="position:absolute;left:937px;top:181px;width:1px;height:246px;background:#ffffff"></div>
<div style="position:absolute;left:667px;top:426px;width:271px;height:1px;background:#ffffff"></div>
<div style="position:absolute;left:747px;top:182px;width:24px;height:2px;background:#000"></div>
<div style="position:absolute;left:757px;top:181px;width:2px;height:14px;background:#000"></div>
<div style="position:absolute;left:958px;top:181px;width:17px;height:246px;background:#a0a0a0"></div>
<div style="position:absolute;left:959px;top:182px;width:15px;height:244px;background:linear-gradient(180deg,#0000ff,#000000)"></div>
<div style="position:absolute;left:974px;top:181px;width:1px;height:246px;background:#ffffff"></div>
<div style="position:absolute;left:958px;top:426px;width:17px;height:1px;background:#ffffff"></div>
<svg style="position:absolute;left:970px;top:172px" width="16" height="22"><path d="M5,9.5 L11.5,4.5 L12,5 V17 L6,11.2 Z" fill="#ffffff"/></svg>
<div style="position:absolute;left:667px;top:453px;width:73px;height:136px;background:#0000ff;border:1px solid;border-color:#aeaea6 #ffffff #ffffff #aeaea6"></div>
<div style="position:absolute;left:806px;top:454px;width:55px;height:25px;background:#4f4f4f;border-radius:3px;box-shadow:inset 0 0 0 1px #484848"></div>
<div style="position:absolute;left:843px;top:455px;width:17px;height:23px;background:#5e5e5e;border-radius:0 3px 3px 0;box-shadow:inset 0 0 0 1px #646464"></div>
<svg style="position:absolute;left:842px;top:454px" width="18" height="25"><path d="M4,10.0 L9,5.0 L14,10.0 Z" fill="#cccccc"/><path d="M4,15.0 L9,20.0 L14,15.0 Z" fill="#cccccc"/></svg>
<div style="position:absolute;left:806px;top:489px;width:55px;height:24px;background:#4f4f4f;border-radius:3px;box-shadow:inset 0 0 0 1px #484848"></div>
<div style="position:absolute;left:843px;top:490px;width:17px;height:22px;background:#5e5e5e;border-radius:0 3px 3px 0;box-shadow:inset 0 0 0 1px #646464"></div>
<svg style="position:absolute;left:842px;top:489px" width="18" height="24"><path d="M4,9.5 L9,4.5 L14,9.5 Z" fill="#7c7c7c"/><path d="M4,14.5 L9,19.5 L14,14.5 Z" fill="#cccccc"/></svg>
<div style="position:absolute;left:806px;top:523px;width:55px;height:24px;background:#4f4f4f;border-radius:3px;box-shadow:inset 0 0 0 1px #484848"></div>
<div style="position:absolute;left:843px;top:524px;width:17px;height:22px;background:#5e5e5e;border-radius:0 3px 3px 0;box-shadow:inset 0 0 0 1px #646464"></div>
<svg style="position:absolute;left:842px;top:523px" width="18" height="24"><path d="M4,9.5 L9,4.5 L14,9.5 Z" fill="#7c7c7c"/><path d="M4,14.5 L9,19.5 L14,14.5 Z" fill="#cccccc"/></svg>
<div style="position:absolute;left:927px;top:455px;width:55px;height:24px;background:#4f4f4f;border-radius:3px;box-shadow:inset 0 0 0 1px #484848"></div>
<div style="position:absolute;left:964px;top:456px;width:17px;height:22px;background:#5e5e5e;border-radius:0 3px 3px 0;box-shadow:inset 0 0 0 1px #646464"></div>
<svg style="position:absolute;left:963px;top:455px" width="18" height="24"><path d="M4,9.5 L9,4.5 L14,9.5 Z" fill="#cccccc"/><path d="M4,14.5 L9,19.5 L14,14.5 Z" fill="#7c7c7c"/></svg>
<div style="position:absolute;left:927px;top:489px;width:55px;height:24px;background:#4f4f4f;border-radius:3px;box-shadow:inset 0 0 0 1px #484848"></div>
<div style="position:absolute;left:964px;top:490px;width:17px;height:22px;background:#5e5e5e;border-radius:0 3px 3px 0;box-shadow:inset 0 0 0 1px #646464"></div>
<svg style="position:absolute;left:963px;top:489px" width="18" height="24"><path d="M4,9.5 L9,4.5 L14,9.5 Z" fill="#cccccc"/><path d="M4,14.5 L9,19.5 L14,14.5 Z" fill="#7c7c7c"/></svg>
<div style="position:absolute;left:927px;top:523px;width:55px;height:24px;background:#4f4f4f;border-radius:3px;box-shadow:inset 0 0 0 1px #484848"></div>
<div style="position:absolute;left:964px;top:524px;width:17px;height:22px;background:#5e5e5e;border-radius:0 3px 3px 0;box-shadow:inset 0 0 0 1px #646464"></div>
<svg style="position:absolute;left:963px;top:523px" width="18" height="24"><path d="M4,9.5 L9,4.5 L14,9.5 Z" fill="#7c7c7c"/><path d="M4,14.5 L9,19.5 L14,14.5 Z" fill="#cccccc"/></svg>
<div style="position:absolute;left:806px;top:563px;width:111px;height:26px;background:#4f4f4f;border-radius:3px;box-shadow:inset 0 0 0 1px #484848"></div>
<div class="t" style="left:747.7px;top:457.9px;font-size:13.7px;color:#ececec;letter-spacing:0.086px">Цв. <u>т</u>он:</div>
<div class="t" style="left:770.5px;top:492.3px;font-size:13.7px;color:#ececec;letter-spacing:0.033px"><u>Н</u>ас:</div>
<div class="t" style="left:770.5px;top:526.2px;font-size:13.7px;color:#ececec;letter-spacing:0.033px">Ярк:</div>
<div class="t" style="left:894.2px;top:458.3px;font-size:13.7px;color:#ececec;letter-spacing:0.4px"><u>К</u>р.:</div>
<div class="t" style="left:888.7px;top:492.4px;font-size:13.7px;color:#ececec;letter-spacing:-0.075px"><u>З</u>ел.:</div>
<div class="t" style="left:887.5px;top:526.2px;font-size:13.7px;color:#ececec;letter-spacing:-0.275px">Си<u>н</u>.:</div>
<div class="t" style="left:759.3px;top:567.9px;font-size:13.7px;color:#ececec;letter-spacing:-0.5px"><u>H</u>TML:</div>
<div class="t" style="left:812.6px;top:458.4px;font-size:13.7px;color:#ececec;letter-spacing:-0.7px">240</div>
<div class="t" style="left:812.2px;top:493.0px;font-size:13.7px;color:#ececec;letter-spacing:-0.7px">255</div>
<div class="t" style="left:812.2px;top:526.9px;font-size:13.7px;color:#ececec;letter-spacing:-0.7px">255</div>
<div class="t" style="left:932.9px;top:458.4px;font-size:13.7px;color:#ececec;letter-spacing:0px">0</div>
<div class="t" style="left:932.9px;top:493.0px;font-size:13.7px;color:#ececec;letter-spacing:0px">0</div>
<div class="t" style="left:932.9px;top:526.9px;font-size:13.7px;color:#ececec;letter-spacing:-0.65px">255</div>
<div class="t" style="left:810.1px;top:567.9px;font-size:13.7px;color:#ececec;letter-spacing:0.25px">#0000ff</div>
<div style="position:absolute;left:810px;top:615px;width:97px;height:27px;border:1px solid #474747;border-radius:4px;box-shadow:inset 0 0 0 1px #666666;background:linear-gradient(#626262,#585858)"></div>
<div style="position:absolute;left:915px;top:615px;width:97px;height:27px;border:1px solid #474747;border-radius:4px;box-shadow:inset 0 0 0 1px #666666;background:linear-gradient(#626262,#585858)"></div>
<div class="t" style="left:849.7px;top:619.8px;font-size:13.7px;color:#ececec;letter-spacing:-0.8px">OK</div>
<div class="t" style="left:940.0px;top:619.8px;font-size:13.7px;color:#ececec;letter-spacing:-0.58px">Отмена</div>
<div style="position:absolute;left:1020px;top:641px;width:2px;height:2px;background:#878787"></div>
<div style="position:absolute;left:1016px;top:645px;width:2px;height:2px;background:#878787"></div>
<div style="position:absolute;left:1020px;top:645px;width:2px;height:2px;background:#878787"></div>
<div style="position:absolute;left:1012px;top:649px;width:2px;height:2px;background:#878787"></div>
<div style="position:absolute;left:1016px;top:649px;width:2px;height:2px;background:#878787"></div>
<div style="position:absolute;left:1020px;top:649px;width:2px;height:2px;background:#878787"></div>
<div style="position:absolute;left:1008px;top:652px;width:2px;height:2px;background:#878787"></div>
<div style="position:absolute;left:1012px;top:652px;width:2px;height:2px;background:#878787"></div>
<div style="position:absolute;left:1016px;top:652px;width:2px;height:2px;background:#878787"></div>
<div style="position:absolute;left:1020px;top:652px;width:2px;height:2px;background:#878787"></div>
</body></html>
